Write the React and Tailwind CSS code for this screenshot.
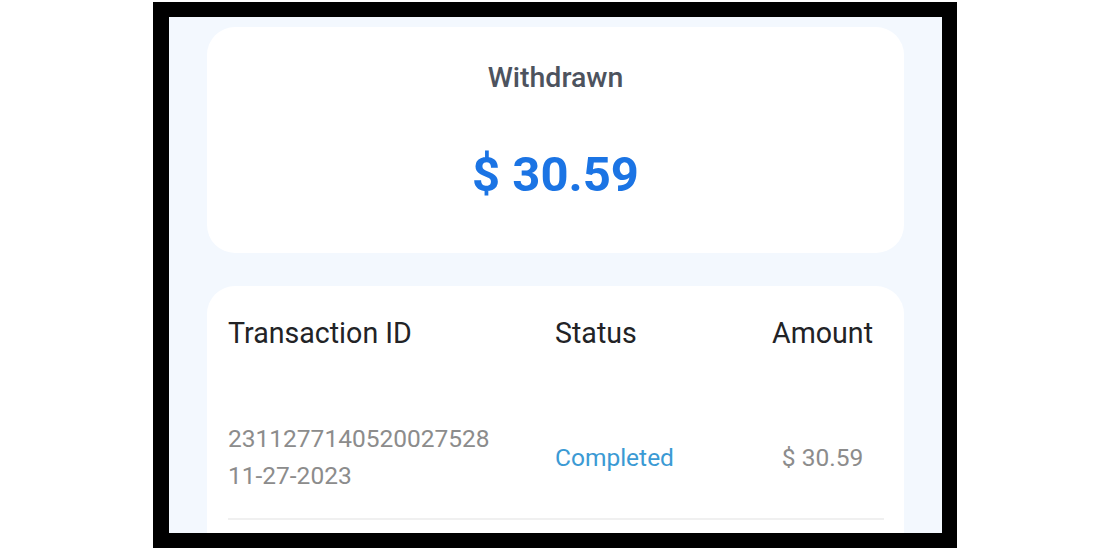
export default function App() {
  return (
    <div className="w-[1110px] h-[550px] bg-white pt-[2px] pl-[153px] font-['Roboto',sans-serif]">
      <div className="w-[804px] h-[546px] bg-black pl-[16px] pr-[15px] pt-[15px] pb-[15px]">
        <div className="h-full w-full bg-[#f3f8fe] overflow-hidden px-[38px] pt-[10px] flex flex-col gap-[33px]">
          <div className="h-[226px] shrink-0 bg-white rounded-[28px] flex flex-col items-center pt-[34px]">
            <div className="h-[34px] leading-[34px] text-[28.5px] font-medium text-[#4d535e]">Withdrawn</div>
            <div className="mt-[50px] h-[60px] leading-[60px] text-[49px] font-bold text-[#1b74e4]">$ 30.59</div>
          </div>
          <div className="flex-1 bg-white rounded-t-[28px] pl-[21px] pr-[20px] pt-[27px]">
            <div className="grid grid-cols-[327px_207px_121px] h-[40px] items-center text-[28.6px] leading-[40px] text-[#222326]">
              <div>Transaction ID</div>
              <div>Status</div>
              <div className="text-right pr-[10px]">Amount</div>
            </div>
            <div className="mt-[67px] grid grid-cols-[327px_207px_121px] items-center pb-[24px] border-b-2 border-[#f0f0f0]">
              <div className="text-[24.5px] leading-[37px] text-[#8c8c8c]">
                <div>2311277140520027528</div>
                <div>11-27-2023</div>
              </div>
              <div className="text-[24.5px] leading-[37px] text-[#3b9ad4]">Completed</div>
              <div className="text-[24.5px] leading-[37px] text-[#8c8c8c] text-center">$ 30.59</div>
            </div>
          </div>
        </div>
      </div>
    </div>
  );
}
